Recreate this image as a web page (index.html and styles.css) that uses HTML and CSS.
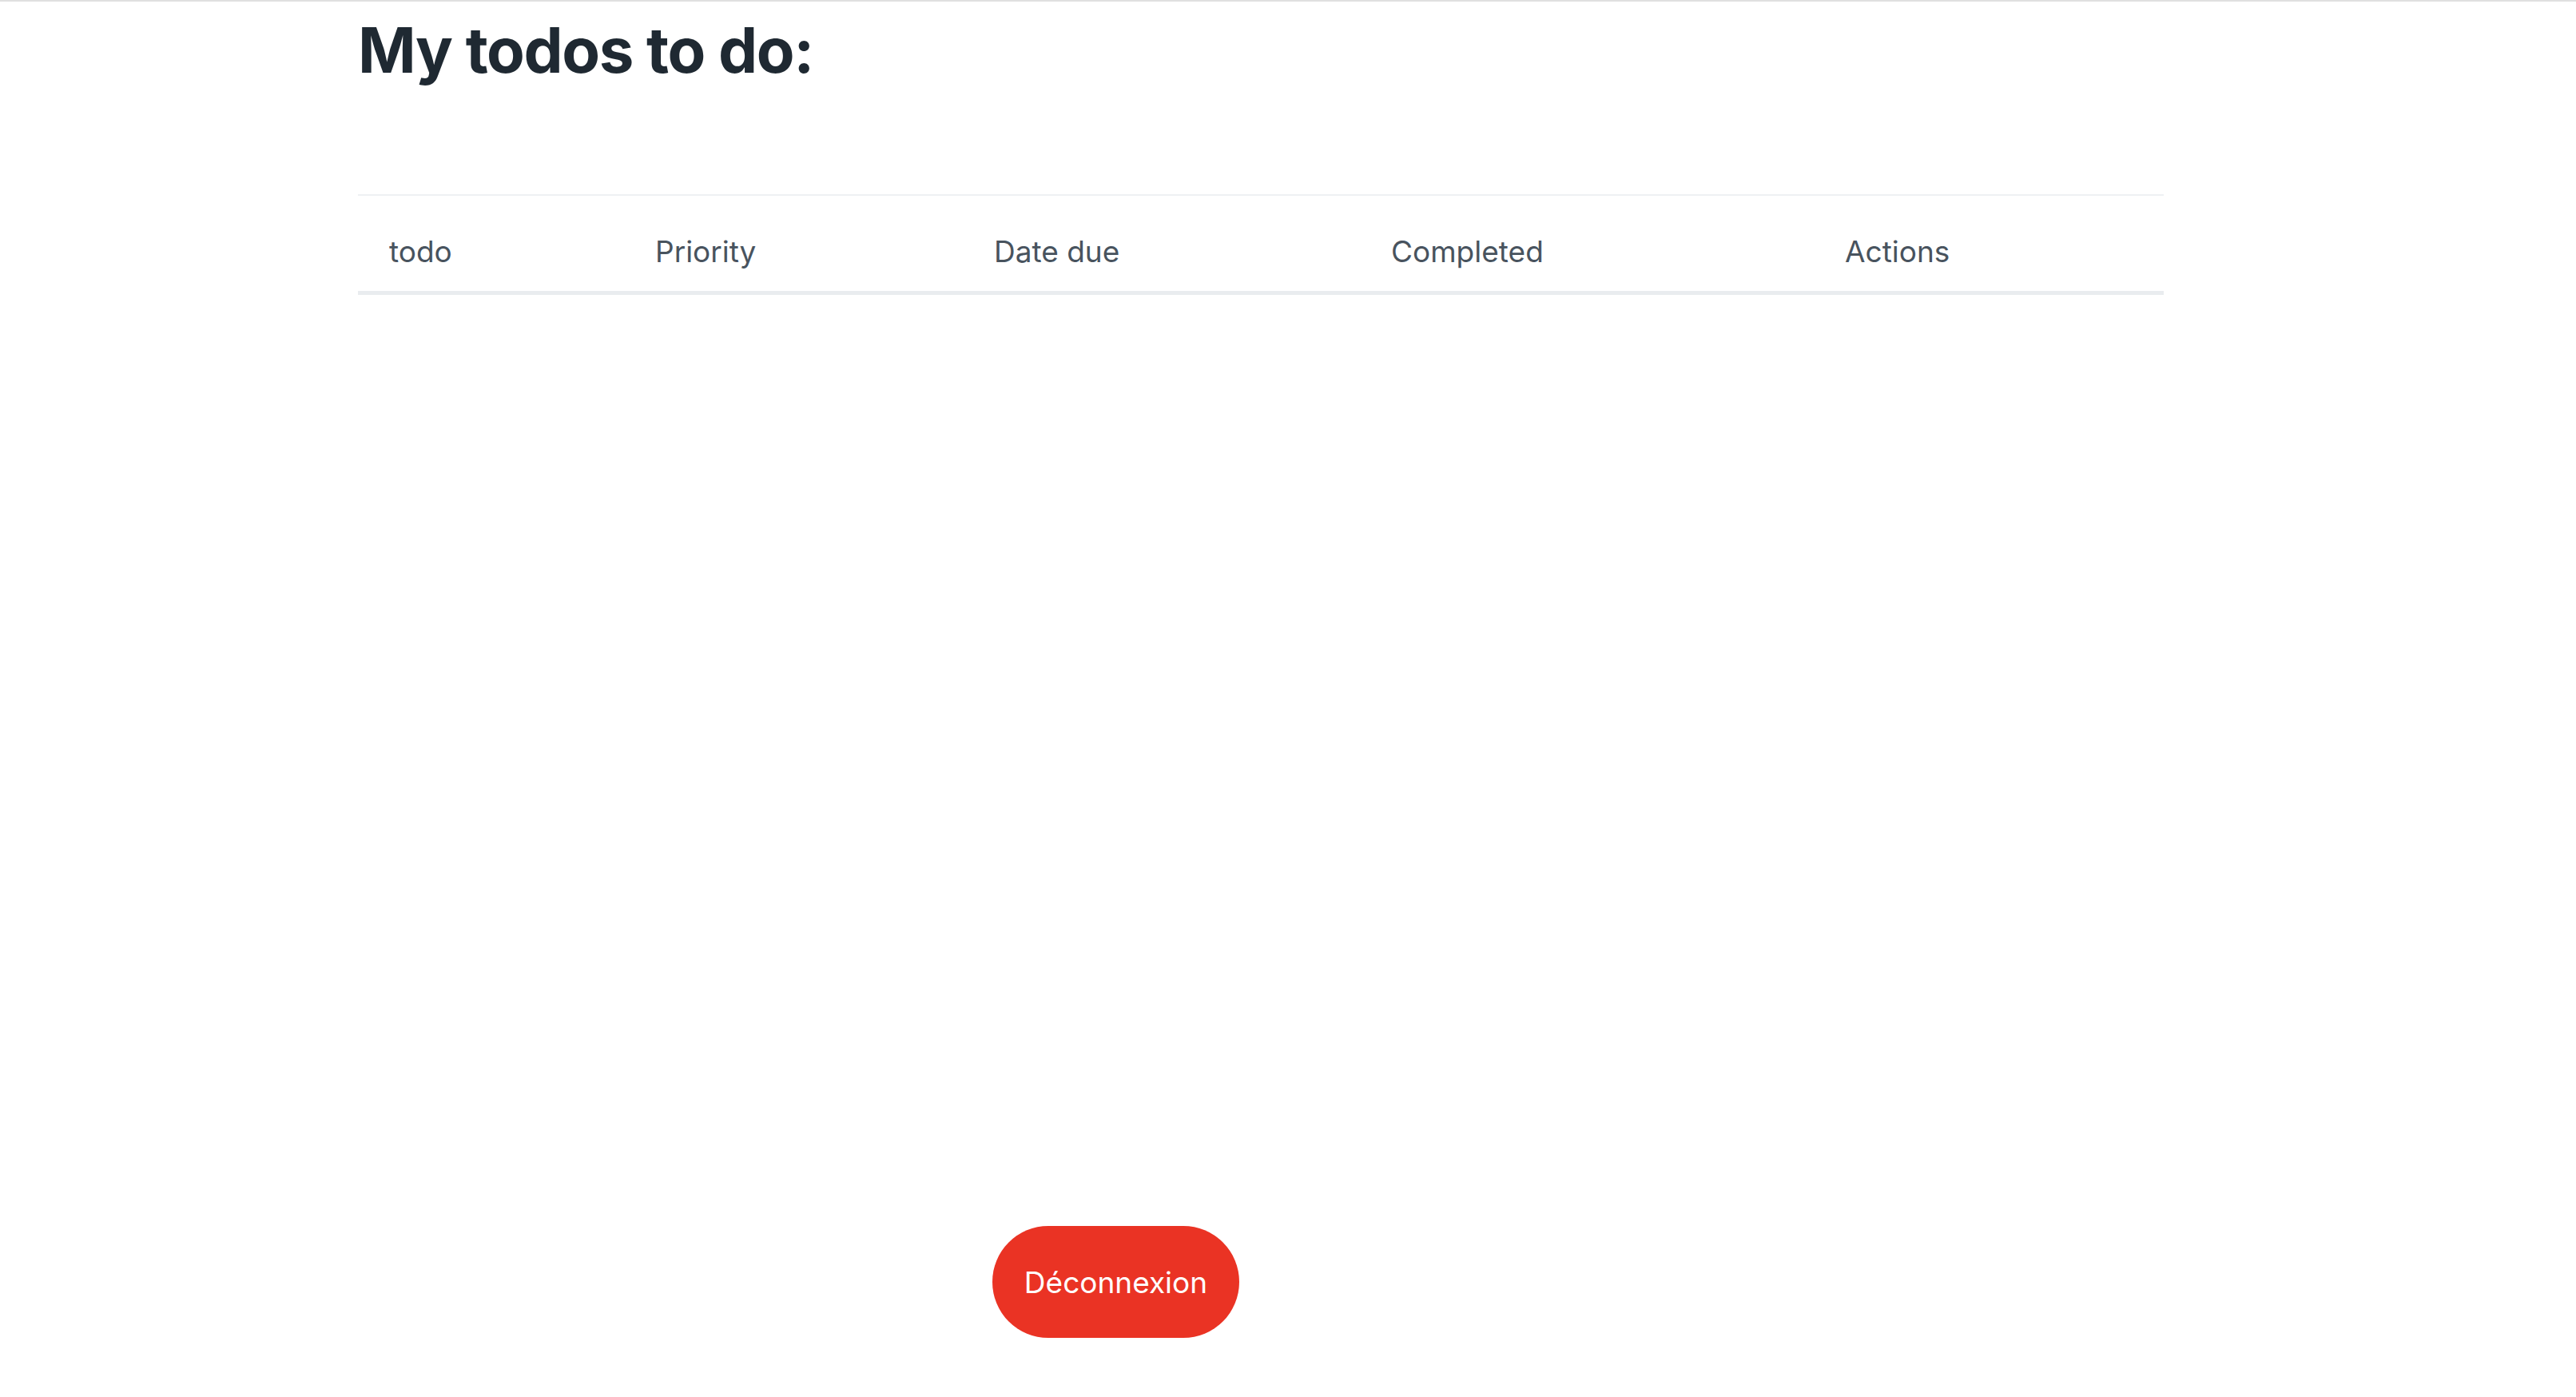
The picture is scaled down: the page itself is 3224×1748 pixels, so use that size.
FILE: index.html
```html
<!DOCTYPE html>
<html lang="en">
<head>
<meta charset="utf-8">
<title>My todos</title>
<link rel="stylesheet" href="styles.css">
</head>
<body>
<div class="topbar"></div>
<main class="container">
  <h1 class="title">My todos to do:</h1>
  <table class="todos">
    <thead>
      <tr>
        <th class="c1">todo</th>
        <th class="c2">Priority</th>
        <th class="c3">Date due</th>
        <th class="c4">Completed</th>
        <th class="c5">Actions</th>
      </tr>
    </thead>
    <tbody></tbody>
  </table>
  <div class="actions">
    <button class="logout">Déconnexion</button>
  </div>
</main>
</body>
</html>
```
FILE: styles.css
```css
html, body {
  margin: 0;
  padding: 0;
  background: #ffffff;
}
body {
  font-family: Inter, "Noto Sans", "Liberation Sans", sans-serif;
  color: #1f2932;
}
.topbar {
  height: 0;
  border-top: 2px solid #e0e0e0;
}
.container {
  margin-left: 448px;
  width: 2260px;
}
.title {
  margin: 14px 0 133px 0;
  font-size: 78px;
  line-height: 94px;
  font-weight: 700;
  letter-spacing: -1.4px;
  color: #1f2932;
}
.todos {
  width: 2260px;
  border-collapse: collapse;
  table-layout: fixed;
}
.todos th {
  box-sizing: border-box;
  text-align: left;
  font-weight: 400;
  font-size: 37px;
  line-height: 54px;
  color: #48535e;
  padding: 43px 0 22px 39px;
  border-top: 2px solid #eef1f3;
  border-bottom: 5px solid #e9ecef;
}
.c1 { width: 333px; }
.c2 { width: 424px; }
.c3 { width: 497px; }
.c4 { width: 568px; }
.c5 { width: 438px; }
.actions {
  margin-top: 1165px;
  padding-left: 794px;
}
.logout {
  width: 309px;
  height: 140px;
  border: none;
  border-radius: 70px;
  background: #ea3324;
  color: #ffffff;
  font-family: Inter, "Noto Sans", "Liberation Sans", sans-serif;
  font-size: 37px;
  font-weight: 400;
  padding: 0;
  cursor: pointer;
}
```
